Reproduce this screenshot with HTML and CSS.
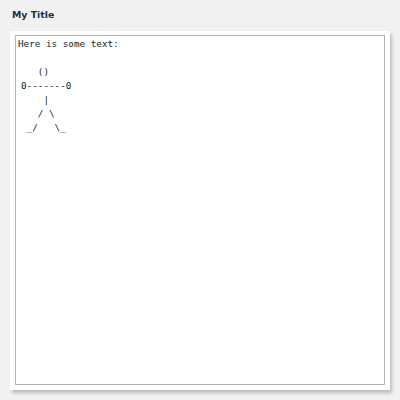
FILE: index.html
```
<!DOCTYPE html>
<html>
<head>
<meta charset="utf-8">
<link rel="stylesheet" href="styles.css">
</head>
<body>
<div class="title">My Title</div>
<div class="panel">
  <div class="box">
    <div class="intro">Here is some text:</div>
<pre class="art">

   ()
0-------0
    |
   / \
 _/   \_</pre>
  </div>
</div>
</body>
</html>
```
FILE: styles.css
```
html, body {
  margin: 0;
  padding: 0;
}
body {
  background: #f1f1f1;
  width: 400px;
  height: 400px;
  overflow: hidden;
}
.title {
  height: 31px;
  box-sizing: border-box;
  padding: 9px 0 0 12px;
  font-family: "DejaVu Sans", sans-serif;
  font-weight: bold;
  font-size: 9.4px;
  line-height: 12px;
  color: #173442;
}
.panel {
  margin: 0 10px;
  width: 380px;
  height: 359px;
  box-sizing: border-box;
  padding: 4px 5px 5px 5px;
  background: #ffffff;
  box-shadow: 2px 3px 3px rgba(0, 0, 0, 0.22);
}
.box {
  height: 350px;
  box-sizing: border-box;
  border: 1px solid #b4b4b4;
  padding: 1px 2px 0 2px;
  font-family: "DejaVu Sans Mono", monospace;
  font-size: 9.3px;
  line-height: 14px;
  color: #0c2a2c;
}
.intro {
  height: 14px;
}
.art {
  margin: 0;
  padding-left: 3px;
  font: inherit;
  color: inherit;
}
```
